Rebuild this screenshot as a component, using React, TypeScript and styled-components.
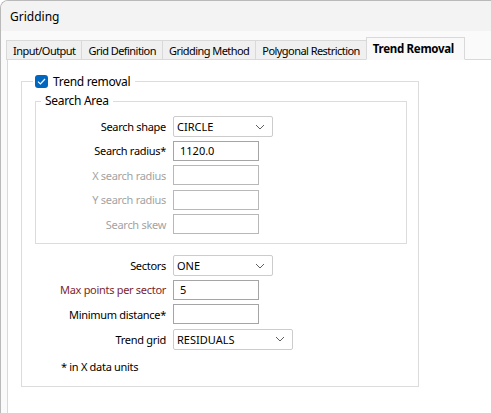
import React from "react"
import styled, { createGlobalStyle } from "styled-components"

const GlobalStyle = createGlobalStyle`
  html, body {
    margin: 0;
    padding: 0;
    background: #ffffff;
  }
  body {
    font-family: "Noto Sans", "Open Sans", sans-serif;
    font-size: 11px;
    letter-spacing: -0.3px;
    color: #000;
  }
`

const tabs = ["Input/Output", "Grid Definition", "Gridding Method", "Polygonal Restriction", "Trend Removal"]

const Chevron: React.FC = () => (
  <svg width="10" height="6" viewBox="0 0 10 6">
    <path d="M1 1 L5 5 L9 1" fill="none" stroke="#5f5f5f" strokeWidth="1" />
  </svg>
)

interface SelectProps {
  value: string
  width: number
}
const Select: React.FC<SelectProps> = ({ value, width }) => (
  <S.Select $width={width}>
    <span>{value}</span>
    <Chevron />
  </S.Select>
)

interface RowProps {
  label: string
  tone?: "normal" | "disabled" | "required"
  children: React.ReactNode
}
const Row: React.FC<RowProps> = ({ label, tone = "normal", children }) => (
  <S.Row>
    <S.Label $tone={tone}>{label}</S.Label>
    {children}
  </S.Row>
)

export default function App() {
  return (
    <>
      <GlobalStyle />
      <S.Window>
        <S.TitleBar>Gridding</S.TitleBar>
        <S.Body>
          <S.TabStrip>
            {tabs.map((t) => (
              <S.Tab key={t} $active={t === "Trend Removal"}>
                {t}
              </S.Tab>
            ))}
          </S.TabStrip>
          <S.Panel>
            <S.Group>
              <S.Legend>
                <S.Check>
                  <svg width="9" height="7" viewBox="0 0 9 7">
                    <path d="M1 3.6 L3.4 6 L8 1" fill="none" stroke="#fff" strokeWidth="1.2" />
                  </svg>
                </S.Check>
                Trend removal
              </S.Legend>
              <S.InnerGroup>
                <S.InnerLegend>Search Area</S.InnerLegend>
                <S.Rows>
                  <Row label="Search shape">
                    <Select value="CIRCLE" width={100} />
                  </Row>
                  <Row label="Search radius*">
                    <S.Input>1120.0</S.Input>
                  </Row>
                  <Row label="X search radius" tone="disabled">
                    <S.Input $disabled />
                  </Row>
                  <Row label="Y search radius" tone="disabled">
                    <S.Input $disabled />
                  </Row>
                  <Row label="Search skew" tone="disabled">
                    <S.Input $disabled />
                  </Row>
                </S.Rows>
              </S.InnerGroup>
              <S.Rows $outer>
                <Row label="Sectors">
                  <Select value="ONE" width={100} />
                </Row>
                <Row label="Max points per sector" tone="required">
                  <S.Input>5</S.Input>
                </Row>
                <Row label="Minimum distance*">
                  <S.Input />
                </Row>
                <Row label="Trend grid">
                  <Select value="RESIDUALS" width={120} />
                </Row>
              </S.Rows>
              <S.Note>* in X data units</S.Note>
            </S.Group>
          </S.Panel>
        </S.Body>
      </S.Window>
    </>
  )
}

const S = {
  Window: styled.div`
    height: 413px;
    box-sizing: border-box;
    border-left: 1px solid #b9b9b9;
    border-top: 1px solid #b9b9b9;
    border-top-left-radius: 8px;
    background: #fafafa;
    overflow: hidden;
    display: flex;
    flex-direction: column;
  `,
  TitleBar: styled.div`
    height: 30px;
    flex-shrink: 0;
    display: flex;
    align-items: center;
    padding-left: 9px;
    background: #f3f3f3;
    font-size: 12px;
    letter-spacing: 0;
  `,
  Body: styled.div`
    flex: 1;
    display: flex;
    flex-direction: column;
    padding: 7px 0 0 6px;
    background: #fafafa;
  `,
  TabStrip: styled.div`
    display: flex;
    align-items: flex-end;
    height: 22px;
    margin-bottom: -1px;
    position: relative;
    z-index: 1;
  `,
  Tab: styled.div<{ $active?: boolean }>`
    box-sizing: border-box;
    height: ${({ $active }) => ($active ? "23px" : "20px")};
    padding: 0 ${({ $active }) => ($active ? "10px" : "6px")} 0 6px;
    display: flex;
    align-items: center;
    border: 1px solid #d9d9d9;
    border-bottom: ${({ $active }) => ($active ? "1px solid #f9f9f9" : "1px solid #d9d9d9")};
    margin-left: -1px;
    background: ${({ $active }) => ($active ? "#f9f9f9" : "#f0f0f0")};
    font-weight: ${({ $active }) => ($active ? 700 : 400)};
    font-size: ${({ $active }) => ($active ? "11.5px" : "11px")};
    letter-spacing: ${({ $active }) => ($active ? "-0.3px" : "-0.55px")};
    white-space: nowrap;
  `,
  Panel: styled.div`
    flex: 1;
    background: #fff;
    border-top: 1px solid #d9d9d9;
    border-left: 1px solid #d9d9d9;
    padding: 13px 0 0 13px;
  `,
  Group: styled.fieldset`
    width: 398px;
    box-sizing: border-box;
    margin: 0;
    padding: 4px 0 12px 13px;
    border: 1px solid #dcdcdc;
  `,
  Legend: styled.legend`
    display: flex;
    align-items: center;
    gap: 5px;
    padding: 0 5px 0 2px;
    margin-left: -2px;
    height: 16px;
    font-size: 12px;
  `,
  Check: styled.span`
    width: 13px;
    height: 13px;
    border-radius: 3px;
    background: #0067c0;
    display: flex;
    align-items: center;
    justify-content: center;
  `,
  InnerGroup: styled.fieldset`
    width: 372px;
    box-sizing: border-box;
    margin: 0 0 11px 0;
    padding: 7px 0 9px 0;
    border: 1px solid #dcdcdc;
  `,
  InnerLegend: styled.legend`
    padding: 0 4px;
    margin-left: 5px;
    height: 16px;
    line-height: 16px;
    font-size: 12px;
  `,
  Rows: styled.div<{ $outer?: boolean }>`
    display: flex;
    flex-direction: column;
    gap: 4.5px;
    margin-left: ${({ $outer }) => ($outer ? "0" : "-1px")};
  `,
  Row: styled.div`
    display: grid;
    grid-template-columns: 131px auto;
    column-gap: 7px;
    align-items: center;
    height: 20px;
  `,
  Label: styled.span<{ $tone: "normal" | "disabled" | "required" }>`
    text-align: right;
    white-space: nowrap;
    color: ${({ $tone }) => ($tone === "disabled" ? "#a3a3a3" : $tone === "required" ? "#7d1f2e" : "#000")};
  `,
  Select: styled.div<{ $width: number }>`
    box-sizing: border-box;
    width: ${({ $width }) => $width}px;
    height: 21px;
    display: flex;
    align-items: center;
    justify-content: space-between;
    padding: 0 7px 0 3px;
    border: 1px solid #cccccc;
    border-radius: 2px;
    background: #fff;
    font-size: 11px;
    letter-spacing: 0;
  `,
  Input: styled.div<{ $disabled?: boolean }>`
    box-sizing: border-box;
    width: 86px;
    height: 20px;
    display: flex;
    align-items: center;
    padding-left: 6px;
    border: 1px solid ${({ $disabled }) => ($disabled ? "#b8b8b8" : "#a5a5a5")};
    background: #fff;
    letter-spacing: 0;
  `,
  Note: styled.div`
    margin: 10px 0 0 26px;
  `,
}
